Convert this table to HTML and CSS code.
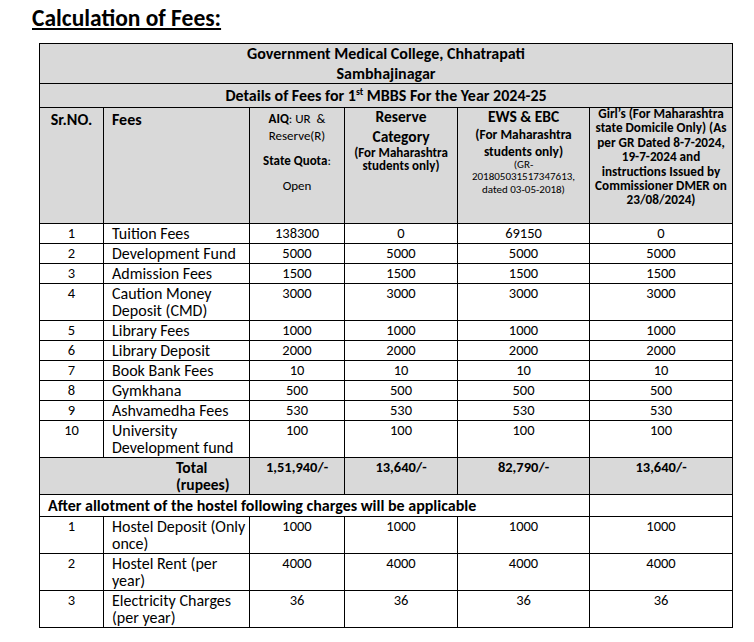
FILE: index.html
```html
<!DOCTYPE html>
<html>
<head>
<meta charset="utf-8">
<link rel="stylesheet" href="styles.css">
</head>
<body>
<div class="page">
  <h1 class="title">Calculation of Fees:</h1>
  <table class="fees">
    <colgroup>
      <col class="c1"><col class="c2"><col class="c3"><col class="c4"><col class="c5"><col class="c6">
    </colgroup>
    <tr class="gray head1">
      <td colspan="6">Government Medical College, Chhatrapati<br>Sambhajinagar</td>
    </tr>
    <tr class="gray head2">
      <td colspan="6">Details of Fees for 1<sup>st</sup> MBBS For the Year 2024-25</td>
    </tr>
    <tr class="gray head3">
      <td class="hd b">Sr.NO.</td>
      <td class="hd left b">Fees</td>
      <td class="aiq">
        <div class="p1"><b>AIQ</b>: UR &nbsp;&amp;<br>Reserve(R)</div>
        <div class="p2"><b>State Quota</b>:<br>Open</div>
      </td>
      <td class="res">
        <div class="big">Reserve<br>Category</div>
        <div class="small">(For Maharashtra<br>students only)</div>
      </td>
      <td class="ews">
        <div class="big">EWS &amp; EBC</div>
        <div class="mid">(For Maharashtra<br>students only)</div>
        <div class="tiny">(GR-<br>201805031517347613,<br>dated 03-05-2018)</div>
      </td>
      <td class="girls"><div class="girls-text">Girl’s (For Maharashtra<br>state Domicile Only) (As<br>per GR Dated 8-7-2024,<br>19-7-2024 and<br>instructions Issued by<br>Commissioner DMER on<br>23/08/2024)</div></td>
    </tr>
    <tr class="row"><td>1</td><td class="left">Tuition Fees</td><td>138300</td><td>0</td><td>69150</td><td>0</td></tr>
    <tr class="row"><td>2</td><td class="left">Development Fund</td><td>5000</td><td>5000</td><td>5000</td><td>5000</td></tr>
    <tr class="row"><td>3</td><td class="left">Admission Fees</td><td>1500</td><td>1500</td><td>1500</td><td>1500</td></tr>
    <tr class="row"><td>4</td><td class="left">Caution Money<br>Deposit (CMD)</td><td>3000</td><td>3000</td><td>3000</td><td>3000</td></tr>
    <tr class="row"><td>5</td><td class="left">Library Fees</td><td>1000</td><td>1000</td><td>1000</td><td>1000</td></tr>
    <tr class="row"><td>6</td><td class="left">Library Deposit</td><td>2000</td><td>2000</td><td>2000</td><td>2000</td></tr>
    <tr class="row"><td>7</td><td class="left">Book Bank Fees</td><td>10</td><td>10</td><td>10</td><td>10</td></tr>
    <tr class="row"><td>8</td><td class="left">Gymkhana</td><td>500</td><td>500</td><td>500</td><td>500</td></tr>
    <tr class="row"><td>9</td><td class="left">Ashvamedha Fees</td><td>530</td><td>530</td><td>530</td><td>530</td></tr>
    <tr class="row"><td>10</td><td class="left">University<br>Development fund</td><td>100</td><td>100</td><td>100</td><td>100</td></tr>
    <tr class="gray total">
      <td colspan="2" class="total-label">Total<br>(rupees)</td>
      <td>1,51,940/-</td><td>13,640/-</td><td>82,790/-</td><td>13,640/-</td>
    </tr>
    <tr class="after">
      <td colspan="5" class="after-label">After allotment of the hostel following charges will be applicable</td>
      <td></td>
    </tr>
    <tr class="row"><td>1</td><td class="left">Hostel Deposit (Only<br>once)</td><td>1000</td><td>1000</td><td>1000</td><td>1000</td></tr>
    <tr class="row"><td>2</td><td class="left">Hostel Rent (per<br>year)</td><td>4000</td><td>4000</td><td>4000</td><td>4000</td></tr>
    <tr class="row"><td>3</td><td class="left">Electricity Charges<br>(per year)</td><td>36</td><td>36</td><td>36</td><td>36</td></tr>
  </table>
</div>
</body>
</html>
```

FILE: styles.css
```css
html, body {
  margin: 0;
  padding: 0;
  background: #ffffff;
}
body {
  font-family: Carlito, Lato, "Liberation Sans", sans-serif;
  color: #000000;
}
.page {
  padding: 4px 0 0 32px;
}
.title {
  margin: 0 0 10px 0;
  font-size: 23.5px;
  line-height: 29px;
  font-weight: bold;
  text-decoration: underline;
  text-decoration-thickness: 2px;
  text-underline-offset: 2px;
}
.fees {
  margin-left: 7px;
  border-collapse: collapse;
  table-layout: fixed;
  width: 693px;
  font-size: 14.5px;
  line-height: 17px;
}
.c1 { width: 64px; }
.c2 { width: 146px; }
.c3 { width: 95px; }
.c4 { width: 113px; }
.c5 { width: 132px; }
.c6 { width: 143px; }
.fees td {
  border: 1px solid #000000;
  padding: 1px 3px;
  vertical-align: top;
  text-align: center;
  white-space: nowrap;
}
.fees td.left {
  text-align: left;
  padding-left: 8px;
  font-size: 16px;
}
.b { font-weight: bold; }
.gray td { background: #d9d9d9; }
.head1 td {
  font-weight: bold;
  font-size: 16px;
  line-height: 19.5px;
  padding: 0;
}
.head2 td {
  font-weight: bold;
  font-size: 16px;
  line-height: 20px;
  padding: 2px 0 1px 0;
}
.head2 sup {
  font-size: 10px;
  line-height: 0;
  vertical-align: 6px;
}
.head3 td {
  height: 116px;
  padding-top: 2px;
  padding-bottom: 0;
  box-sizing: border-box;
}
.fees td.hd {
  font-size: 16px;
  line-height: 20px;
}
.aiq { font-size: 13px; }
.aiq .p1 { line-height: 17px; }
.aiq .p2 { margin-top: 4px; line-height: 25px; }
.res, .ews { font-weight: bold; }
.res .big { font-size: 15.5px; line-height: 20px; margin-top: -3px; }
.res .small { font-size: 13px; line-height: 12.5px; margin-top: 0; }
.ews .big { font-size: 15.5px; line-height: 19px; margin-top: -3px; }
.ews .mid { font-size: 13.4px; line-height: 17px; }
.ews .tiny { font-size: 11px; line-height: 12.3px; font-weight: normal; margin-top: -1px; }
.fees td.girls {
  font-weight: bold;
  font-size: 13.2px;
  line-height: 14.4px;
  padding: 0 1px;
}
.girls-text { margin-top: -1px; }
.total td {
  font-weight: bold;
}
.fees td.total-label {
  text-align: left;
  padding-left: 136px;
  font-size: 15.5px;
}
.fees td.after-label {
  text-align: left;
  padding-left: 8px;
  font-weight: bold;
  font-size: 16px;
  line-height: 19px;
}
```
